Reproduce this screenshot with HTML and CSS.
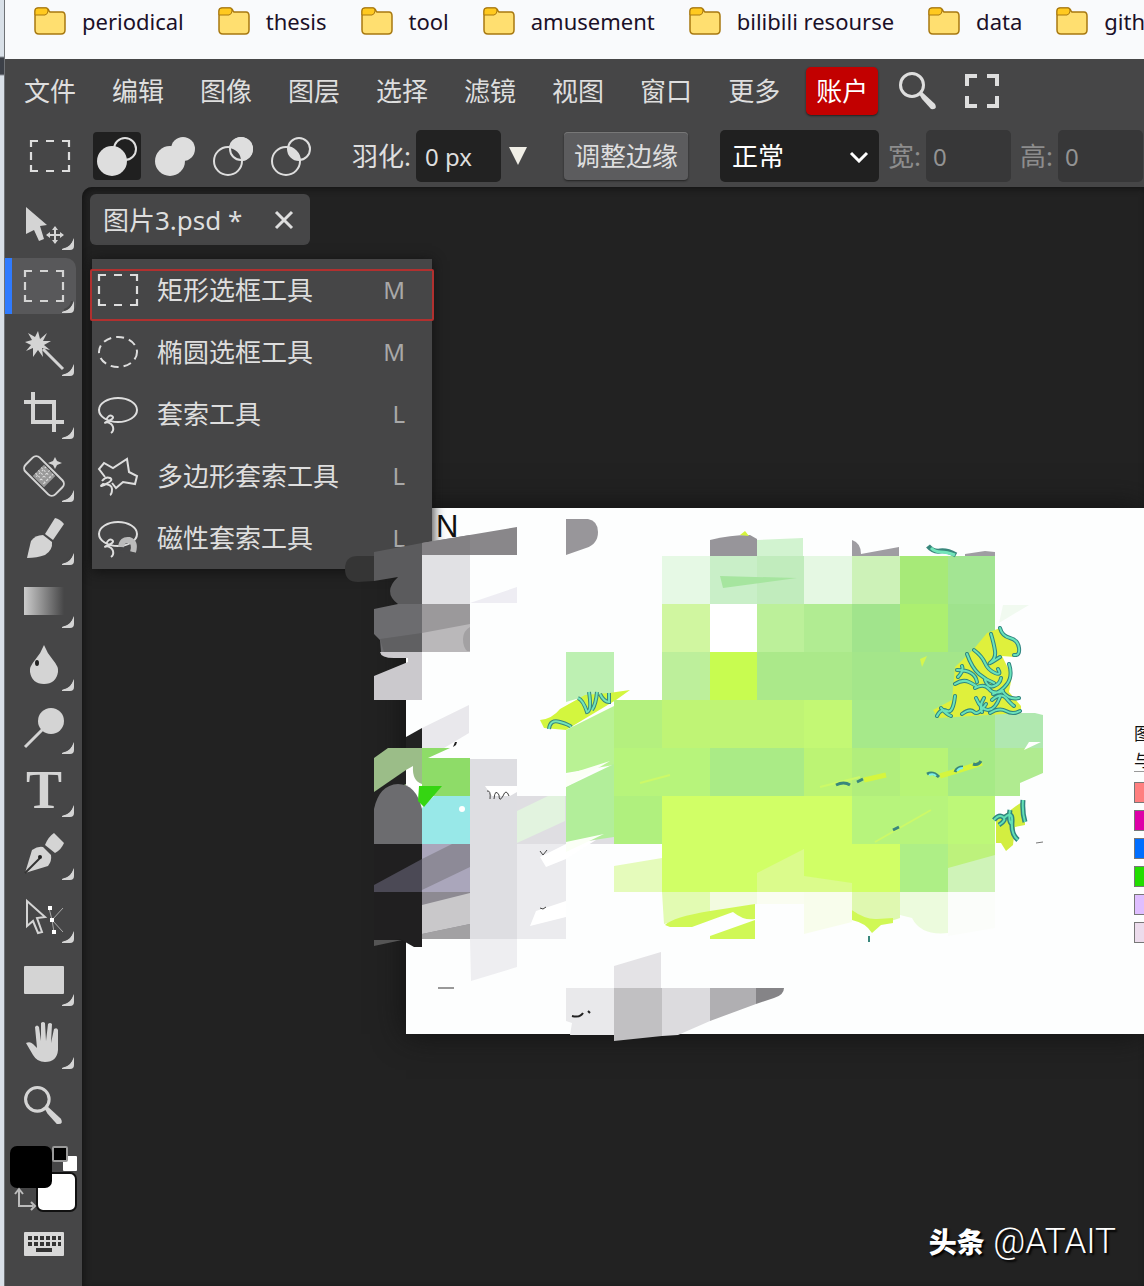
FILE: index.html
```html
<!DOCTYPE html>
<html lang="zh">
<head>
    <meta charset="UTF-8">
    <meta name="viewport" content="width=device-width, initial-scale=1.0">
    <title>图片3.psd</title>
    <link rel="stylesheet" href="styles.css">
</head>
<body>
    <!-- shared symbols -->
    <svg class="defs" width="0" height="0">
        <symbol id="folder" viewBox="0 0 32 28">
            <path d="M1 4q0-3 3-3h8q2 0 3 3l1 1h12q3 0 3 4v14q0 4-4 4H5q-4 0-4-4z" fill="#ffdf70" stroke="#a8780f" stroke-width="1.5"/>
            <path d="M1 4q0-3 3-3h8q2 0 2 3t-3 4H1z" fill="#ffc91f" stroke="#a8780f"/>
        </symbol>
        <symbol id="marquee" viewBox="0 0 42 34">
            <path d="M2 8V2h7M17 2h8M33 2h7v6M40 13v8M40 26v6h-7M25 32h-8M9 32H2v-6M2 21v-8" fill="none" stroke="currentColor" stroke-width="2.2"/>
        </symbol>
        <symbol id="search" viewBox="0 0 40 40">
            <circle cx="14" cy="14" r="11.500" fill="none" stroke="currentColor" stroke-width="3"/>
            <path d="M21 23l3-2 13 12q3 6-4 5L24 28z" fill="currentColor"/>
        </symbol>
        <symbol id="corner" viewBox="0 0 12 12">
            <path d="M0 11q9-3 12-11v8q0 4-4 4H0z" fill="currentColor"/>
            <path d="M2 9q7-2 8-9" fill="none" stroke="#464647" stroke-width="2"/>
        </symbol>
        <symbol id="lasso" viewBox="0 0 42 40">
            <ellipse cx="21" cy="16" rx="19" ry="12" fill="none" stroke="currentColor" stroke-width="2"/>
            <path d="M9 26q3-6 6-4t-3 5-3 1q6 1 7 5t-2 6" fill="none" stroke="currentColor" stroke-width="2"/>
        </symbol>
        <clipPath id="lens"><circle cx="16" cy="27" r="14"/></clipPath>
    </svg>

    <div class="desktop-edge"></div>

    <div class="window">
        <nav class="bookmarks">
            <a href="#"><svg><use href="#folder"/></svg>periodical</a>
            <a href="#"><svg><use href="#folder"/></svg>thesis</a>
            <a href="#"><svg><use href="#folder"/></svg>tool</a>
            <a href="#"><svg><use href="#folder"/></svg>amusement</a>
            <a href="#"><svg><use href="#folder"/></svg>bilibili resourse</a>
            <a href="#"><svg><use href="#folder"/></svg>data</a>
            <a href="#"><svg><use href="#folder"/></svg>github</a>
        </nav>

        <div class="menubar">
            <button>文件</button>
            <button>编辑</button>
            <button>图像</button>
            <button>图层</button>
            <button>选择</button>
            <button>滤镜</button>
            <button>视图</button>
            <button>窗口</button>
            <button>更多</button>
            <button class="account">账户</button>
            <button class="icon-btn" aria-label="搜索"><svg width="40" height="40"><use href="#search"/></svg></button>
            <button class="icon-btn" aria-label="全屏">
                <svg width="34" height="34" viewBox="0 0 34 34"><path d="M2 12V2h10M22 2h10v10M32 22v10H22M12 32H2V22" fill="none" stroke="currentColor" stroke-width="4"/></svg>
            </button>
        </div>

        <div class="options">
            <svg class="current-tool" width="42" height="34"><use href="#marquee"/></svg>
            <div class="modes">
                <button class="active" aria-label="新选区">
                    <svg viewBox="0 0 42 44"><circle cx="29" cy="15" r="11" fill="none" stroke="currentColor" stroke-width="2"/><circle cx="16" cy="27" r="15" fill="currentColor"/></svg>
                </button>
                <button aria-label="添加">
                    <svg viewBox="0 0 42 44"><circle cx="29" cy="15" r="12" fill="currentColor"/><circle cx="16" cy="27" r="15" fill="currentColor"/></svg>
                </button>
                <button aria-label="减去">
                    <svg viewBox="0 0 42 44"><circle cx="29" cy="15" r="12" fill="currentColor"/><circle cx="16" cy="27" r="14" fill="#464647"/><circle cx="29" cy="15" r="11" fill="none" stroke="currentColor" stroke-width="2"/><circle cx="16" cy="27" r="14" fill="none" stroke="currentColor" stroke-width="2"/></svg>
                </button>
                <button aria-label="交叉">
                    <svg viewBox="0 0 42 44"><circle cx="29" cy="15" r="11" fill="none" stroke="currentColor" stroke-width="2"/><circle cx="16" cy="27" r="14" fill="none" stroke="currentColor" stroke-width="2"/><circle cx="29" cy="15" r="11" fill="currentColor" clip-path="url(#lens)"/></svg>
                </button>
            </div>
            <label for="feather">羽化:</label>
            <input id="feather" type="text" value="0 px">
            <button class="drop" aria-label="羽化值"><svg width="18" height="18" viewBox="0 0 18 18"><path d="M0 0h18L9 18z" fill="currentColor"/></svg></button>
            <button class="refine">调整边缘</button>
            <div class="select">
                <select aria-label="样式"><option>正常</option></select>
                <svg width="20" height="12" viewBox="0 0 20 12"><path d="M2 2l8 8 8-8" fill="none" stroke="#fff" stroke-width="3"/></svg>
            </div>
            <label class="off" for="w">宽:</label>
            <input id="w" type="text" value="0" disabled>
            <label class="off" for="h">高:</label>
            <input id="h" type="text" value="0" disabled>
        </div>

        <div class="main">
            <div class="tools">
                <button class="tool" aria-label="移动"><svg viewBox="0 0 71 56">
                    <path d="M21 12l21 18-7 1 4 13-5 2-5-11-8 4z" fill="currentColor"/>
                    <path d="M50 32v16M42 40h16" stroke="currentColor" stroke-width="2"/>
                    <path d="M50 31l3 4h-6zM50 49l3-4h-6zM41 40l4-3v6zM59 40l-4-3v6z" fill="currentColor"/>
                    <use href="#corner" x="57" y="43" width="12" height="12"/></svg></button>
                <button class="tool active" aria-label="矩形选框"><svg viewBox="0 0 71 56">
                    <use href="#marquee" x="18" y="11" width="42" height="34"/>
                    <use href="#corner" x="57" y="43" width="12" height="12"/></svg></button>
                <button class="tool" aria-label="魔棒"><svg viewBox="0 0 71 56">
                    <path d="M33 10l2 8 7-6-4 8 8 0-7 4 6 5-8-2 1 9-5-7-5 7 0-9-7 3 5-6-6-3 7-2-4-7 7 4z" fill="currentColor"/>
                    <path d="M38 28l20 20" stroke="currentColor" stroke-width="3"/>
                    <use href="#corner" x="57" y="43" width="12" height="12"/></svg></button>
                <button class="tool" aria-label="裁剪"><svg viewBox="0 0 71 56">
                    <path d="M19 18h30v30M28 8v30h31" fill="none" stroke="currentColor" stroke-width="4"/>
                    <use href="#corner" x="57" y="43" width="12" height="12"/></svg></button>
                <button class="tool" aria-label="修复画笔"><svg viewBox="0 0 71 56">
                    <g transform="rotate(45 39 29)"><rect x="18" y="19" width="42" height="20" rx="5" fill="none" stroke="currentColor" stroke-width="2"/><rect x="31" y="21" width="16" height="16" fill="#999"/><path d="M34 21v16M39 21v16M44 21v16M31 25h16M31 29h16M31 33h16" stroke="#ddd" stroke-dasharray="2 2"/></g>
                    <path d="M50 10l2 4 5 2-5 2-2 4-2-4-5-2 5-2z" fill="currentColor"/>
                    <use href="#corner" x="57" y="43" width="12" height="12"/></svg></button>
                <button class="tool" aria-label="画笔"><svg viewBox="0 0 71 56">
                    <path d="M50 8q5 1 9 6L48 30l-8-6z" fill="currentColor"/>
                    <path d="M22 48q2-9 4-17 4-6 12-6l9 7q1 8-7 13-8 3-18 3z" fill="currentColor"/>
                    <use href="#corner" x="57" y="43" width="12" height="12"/></svg></button>
                <button class="tool" aria-label="渐变"><svg viewBox="0 0 71 56">
                    <linearGradient id="fade"><stop offset="0" stop-color="#ccc"/><stop offset="1" stop-color="#464647"/></linearGradient>
                    <rect x="19" y="14" width="40" height="28" fill="url(#fade)"/>
                    <use href="#corner" x="57" y="43" width="12" height="12"/></svg></button>
                <button class="tool" aria-label="模糊"><svg viewBox="0 0 71 56">
                    <path d="M39 9q3 8 9 15t5 12q-2 12-14 12T25 36q-1-5 5-12t9-15z" fill="currentColor"/>
                    <ellipse cx="32" cy="27" rx="2" ry="3" fill="#222"/>
                    <use href="#corner" x="57" y="43" width="12" height="12"/></svg></button>
                <button class="tool" aria-label="减淡"><svg viewBox="0 0 71 56">
                    <circle cx="46" cy="22" r="13" fill="currentColor"/>
                    <path d="M20 48l18-18" stroke="currentColor" stroke-width="3"/>
                    <use href="#corner" x="57" y="43" width="12" height="12"/></svg></button>
                <button class="tool" aria-label="文字"><svg viewBox="0 0 71 56">
                    <text class="type" x="39" y="46">T</text>
                    <use href="#corner" x="57" y="43" width="12" height="12"/></svg></button>
                <button class="tool" aria-label="钢笔"><svg viewBox="0 0 71 56">
                    <path d="M49 8l10 10q-3 7-9 10l-10-8q3-8 9-12z" fill="currentColor"/>
                    <path d="M20 48l7-23q6-4 11-3l8 8q1 6-3 11z" fill="currentColor"/>
                    <path d="M20 48l15-15" stroke="#333" stroke-width="2"/><circle cx="35" cy="32" r="2" fill="#222"/>
                    <use href="#corner" x="57" y="43" width="12" height="12"/></svg></button>
                <button class="tool" aria-label="路径选择"><svg viewBox="0 0 71 56">
                    <path d="M22 13l18 16-8 1 5 14-4 1-5-12-6 5z" fill="none" stroke="currentColor" stroke-width="2"/>
                    <path d="M44 20l3 12 2 12M47 32l11-12M47 32l11 12" fill="none" stroke="#aaa"/>
                    <path d="M43 18h4v4h-4zM45 30h4v4h-4zM47 42h4v4h-4z" fill="#fff"/>
                    <use href="#corner" x="57" y="43" width="12" height="12"/></svg></button>
                <button class="tool" aria-label="矩形"><svg viewBox="0 0 71 56">
                    <rect x="19" y="15" width="40" height="28" rx="1" fill="currentColor"/>
                    <use href="#corner" x="57" y="43" width="12" height="12"/></svg></button>
                <button class="tool" aria-label="抓手"><svg viewBox="0 0 71 56">
                    <path d="M21 29q4-2 7 1l4 4-2-21q2-3 4 0l2 14V9q2-2 4 0l1 18 2-17q2-2 4 0l-1 19 3-14q3-2 4 1v20q-1 12-13 12-8 0-12-7z" fill="currentColor"/>
                    <use href="#corner" x="57" y="43" width="12" height="12"/></svg></button>
                <button class="tool" aria-label="缩放"><svg viewBox="0 0 71 56">
                    <use href="#search" x="18" y="8" width="41" height="41"/></svg></button>
                <button class="swatches" aria-label="前景色和背景色"><svg width="77" height="80" viewBox="0 0 77 80">
                    <rect x="32" y="33" width="39" height="38" rx="6" fill="#fff" stroke="#111" stroke-width="2"/>
                    <rect x="5" y="6" width="42" height="42" rx="7" fill="#000"/>
                    <rect x="58" y="16" width="14" height="15" rx="1" fill="#fff"/>
                    <rect x="48" y="7" width="14" height="14" rx="1" fill="#000" stroke="#999" stroke-width="2"/>
                    <path d="M14 50v16h14M10 54l4-5 4 5M26 62l4 4-4 4" fill="none" stroke="#bbb" stroke-width="2"/></svg></button>
                <button class="keyboard" aria-label="键盘"><svg width="40" height="24" viewBox="0 0 40 24">
                    <rect width="40" height="24" rx="1" fill="#d8d8d8"/>
                    <path d="M4 6h33M4 12h33" stroke="#333" stroke-width="4" stroke-dasharray="4 2"/>
                    <path d="M12 18h16" stroke="#333" stroke-width="4"/></svg></button>
            </div>

            <div class="workspace">
                <div class="tab">
                    <span>图片3.psd *</span>
                    <button aria-label="关闭"><svg width="20" height="20" viewBox="0 0 20 20"><path d="M2 2l16 16M18 2L2 18" stroke="currentColor" stroke-width="3"/></svg></button>
                </div>

                <div class="sheet">
                    <span class="sheet-title">N</span>
                    <div class="legend">
                        <span>图例</span>
                        <span class="rule">与界</span>
                        <i class="red"></i>
                        <i class="magenta"></i>
                        <i class="blue"></i>
                        <i class="green"></i>
                        <i class="lilac"></i>
                        <i class="pale"></i>
                    </div>
                </div>

                <div class="flyout">
                    <button><svg viewBox="0 0 42 40"><use href="#marquee" y="3" width="42" height="34"/></svg><span>矩形选框工具</span><kbd>M</kbd></button>
                    <button><svg viewBox="0 0 42 40"><ellipse cx="21" cy="20" rx="19" ry="15" fill="none" stroke="currentColor" stroke-width="2" stroke-dasharray="8 5"/></svg><span>椭圆选框工具</span><kbd>M</kbd></button>
                    <button><svg viewBox="0 0 42 40"><use href="#lasso" width="42" height="40"/></svg><span>套索工具</span><kbd>L</kbd></button>
                    <button><svg viewBox="0 0 42 40"><path d="M8 21L2 13l5-6 9 5L30 3l2 13 8 4-2 8-12-2-7 6-4-5" fill="none" stroke="currentColor" stroke-width="2"/><path d="M5 25q4-5 8-3t-4 6-3 0q9 0 9 5t-2 6" fill="none" stroke="currentColor" stroke-width="2"/></svg><span>多边形套索工具</span><kbd>L</kbd></button>
                    <button><svg viewBox="0 0 42 40"><use href="#lasso" width="42" height="40"/><path d="M24 29q1-8 8-7 7 2 4 12" fill="none" stroke="#bbb" stroke-width="6"/><path d="M22 33l6 1M33 35l6 1" stroke="#464647" stroke-width="2"/></svg><span>磁性套索工具</span><kbd>L</kbd></button>
                    <div class="highlight"></div>
                </div>

                <!-- mosaic painted over the map -->
                <svg class="mosaic" viewBox="344 508 800 536">
                    <path d="M374 556h-16q-13 0-13 13t13 13l16-1z" fill="#353535"/>
                    <path d="M374 552l48-9v61h-24q-16-12 0-27l-24 4z" fill="#5b5b5d"/>
                    <path d="M422 543l95-16v28h-95z" fill="#89878a"/>
                    <path d="M422 543l48-8v20h-48z" fill="#838184"/>
                    <path d="M566 519h22q10 2 10 13 0 12-12 16l-20 7z" fill="#98969a"/>
                    <path d="M422 555h48v49h-48z" fill="#e1e1e4"/>
                    <path d="M470 603l47-16v16z" fill="#eeedf3"/>
                    <path d="M374 609l24-5h24v48h-41l-1-12-6-6z" fill="#6c6c6f"/>
                    <path d="M380 639l42-6v19h-38z" fill="#606062"/>
                    <path d="M422 604h48v48h-48z" fill="#9b999b"/>
                    <path d="M422 633l48-9v28h-48z" fill="#bab8ba"/>
                    <path d="M470 627q-7 4-7 12t4 12h3z" fill="#a3a1a3"/>
                    <path d="M380 652h42v48h-48v-24l34-14v-4h-14q-13 0-14-6z" fill="#cbc9cd"/>
                    <path d="M406 737l16-9v20h-16z" fill="#222"/>
                    <path d="M422 728l47-23v28l-25 15h-22z" fill="#e9e8ec"/>
                    <path d="M453 747l2-5h2l-1 3z" fill="#222"/>
                    <path d="M374 758l14-10h34v48h-48z" fill="#9bbd88"/>
                    <path d="M374 792l32-22v14l-26 12-6 2z" fill="#222"/>
                    <path d="M406 770l7-4q-1 15 9 18v24h-16z" fill="#fff"/>
                    <path d="M422 748h28l-22 10h42v38h-48z" fill="#8edc68"/>
                    <path d="M374 844v-35q5-24 24-25 18 0 24 25v35z" fill="#6c6c6f"/>
                    <path d="M422 808l12-12h36v48h-48z" fill="#98e8e8"/>
                    <path d="M419 786h23l-18 21-6-6z" fill="#35d512"/>
                    <circle cx="462" cy="809" r="3" fill="#fff"/>
                    <path d="M374 844h48v103h-8l-14-8-26 6z" fill="#201f20"/>
                    <path d="M374 885l48-26v33h-48z" fill="#4b4955"/>
                    <path d="M422 844h48v48h-48z" fill="#aaa6bb"/>
                    <path d="M422 859l30-15h18v23l-48 23z" fill="#8d8a97"/>
                    <path d="M422 892h48v47h-48z" fill="#8d8a92"/>
                    <path d="M422 905l48-12v31l-48 10z" fill="#c9c8ca"/>
                    <path d="M422 934l48-10v15h-48z" fill="#a2a1a3"/>
                    <path d="M374 940h28l-28 6z" fill="#555"/>
                    <path d="M470 759h47v180h-47z" fill="#dedee2"/>
                    <path d="M485 786h32v6l-7 4h-18z" fill="#fff"/>
                    <path d="M487 791q4-1 3 8M494 799q1-11 5-4 0 8 4 1 3-8 6 0" fill="none" stroke="#444"/>
                    <path d="M517 796h97v48h-97z" fill="#dfdee2"/>
                    <path d="M517 811l31-15h17v25l-48 22z" fill="#e2f3df"/>
                    <path d="M517 844h49v95h-49z" fill="#ebebee"/>
                    <path d="M546 867l-6-10 26-13 30-4-30 19zM530 926l6-15 30-10v16z" fill="#fff"/>
                    <path d="M540 851l3 4 4-5M540 908l3 1 3-2" fill="none" stroke="#444"/>
                    <path d="M470 939h47v28l-46 14z" fill="#eeeef1"/>
                    <path d="M438 988h16" stroke="#999" stroke-width="2"/>

                    <path d="M566 652h48v43h-24l-24 7z" fill="#bdf0b2"/>
                    <path d="M540 720q12-1 20-11l25-14 24-2 21-3-14 10-50 30-22-2z" fill="#d3f63e"/>
                    <path id="creek" d="M549 729q1-10 11-7t11 5M578 698q5 2 9 14 5-1 2-20M597 692q-1 12-5 18M600 694q4 8 9 8v-9" fill="none" stroke="#39877c" stroke-width="4"/>
                    <path d="M549 729q1-10 11-7t11 5M578 698q5 2 9 14 5-1 2-20M597 692q-1 12-5 18M600 694q4 8 9 8v-9" fill="none" stroke="#72e5ba" stroke-width="2"/>
                    <path d="M566 730l48-24v59l-48 8z" fill="#b9f294"/>
                    <path d="M566 787l48-23v73l-48 7z" fill="#b2ee9a"/>

                    <!-- top row -->
                    <path d="M710 540q20-5 40-5l7 4v17h-47z" fill="#97959a"/>
                    <path d="M740 535l5-4 4 5z" fill="#d5f53c"/>
                    <path d="M757 540l46-2v18h-46z" fill="#d2f3d0"/>
                    <path d="M852 540q9 3 9 14l38-7v9h-47zM965 554l20-3 10 1v4h-30z" fill="#9f9da2"/>
                    <path d="M662 556h48v48h-48z" fill="#e6f9e5"/>
                    <path d="M710 556h47v48h-47z" fill="#c9efc8"/>
                    <path d="M757 556h47v48h-47z" fill="#c1ecbd"/>
                    <path d="M804 556h48v48h-48z" fill="#e5f8e3"/>
                    <path d="M852 556h48v48h-48z" fill="#cdf2b8"/>
                    <path d="M900 556h48v48h-48z" fill="#a7ea78"/>
                    <path d="M948 556h47v48h-47z" fill="#a3e593"/>
                    <path d="M720 576l77 2-74 10z" fill="#a6e59f"/>
                    <path d="M928 546q5 6 12 5t16 4" fill="none" stroke="#39877c" stroke-width="5"/>
                    <path d="M931 548q4 4 10 4t14 3" fill="none" stroke="#72e5ba" stroke-width="3"/>
                    <path d="M1003 605h26l-30 18z" fill="#f1faf0"/>

                    <path d="M662 604h48v48h-48z" fill="#d0f6a0"/>
                    <path d="M710 604h47v48h-47z" fill="#fff"/>
                    <path d="M757 604h47v48h-47z" fill="#bcf09a"/>
                    <path d="M804 604h48v48h-48z" fill="#b1ec92"/>
                    <path d="M852 604h48v48h-48z" fill="#a1e48c"/>
                    <path d="M900 604h48v48h-48z" fill="#acef70"/>
                    <path d="M948 604h47v48h-47z" fill="#9fe38d"/>

                    <path d="M662 652h48v48h-48z" fill="#bdef9b"/>
                    <path d="M710 652h47v48h-47z" fill="#c8fc50"/>
                    <path d="M757 652h95v48h-95z" fill="#abe98a"/>
                    <path d="M852 652h143v48H852z" fill="#a4e68a"/>
                    <path d="M920 659l7-3-5 11z" fill="#d5f64e"/>

                    <path d="M614 700h48v48h-48z" fill="#b4f07e"/>
                    <path d="M662 700h142v48H662z" fill="#bff475"/>
                    <path d="M804 700h48v48h-48z" fill="#c3f874"/>
                    <path d="M852 700h143v48H852z" fill="#a6e98a"/>
                    <path d="M995 713h40l8 2v33h-48z" fill="#b0e8b0"/>

                    <path d="M614 748h96v48h-96z" fill="#b7f47b"/>
                    <path d="M710 748h94v48h-94z" fill="#aaeb86"/>
                    <path d="M804 748h48v48h-48z" fill="#bcf474"/>
                    <path d="M852 748h48v48h-48z" fill="#b1ee7c"/>
                    <path d="M900 748h48v48h-48z" fill="#b7f476"/>
                    <path d="M948 748h47v48h-47z" fill="#a6ea86"/>
                    <path d="M995 748h48v25l-23 10v13h-25z" fill="#b0eb90"/>
                    <path d="M1024 750l5-8h12z" fill="#fff"/>

                    <path d="M614 796h48v48h-48z" fill="#b0f07e"/>
                    <path d="M662 796h190v48H662z" fill="#d1ff66"/>
                    <path d="M852 796h96v48h-96z" fill="#b7f47c"/>
                    <path d="M948 796h47v48h-47z" fill="#bdf878"/>

                    <path d="M614 866l48-8v34h-48z" fill="#e5fbbb"/>
                    <path d="M662 844h238v48H662z" fill="#d1ff66"/>
                    <path d="M757 873l47-24v27l48 7v9h-95z" fill="#dbfb8c"/>
                    <path d="M900 844h48v48h-48z" fill="#aeef86"/>
                    <path d="M948 844h47v48h-47z" fill="#bdf27c"/>
                    <path d="M948 868l47-13v37h-47z" fill="#cff3b8"/>

                    <path d="M662 892h48v20l-46 12z" fill="#e2fbb2"/>
                    <path d="M710 892h47v12l-47 8z" fill="#f2fbe0"/>
                    <path d="M757 892h47v12h-47z" fill="#fafdf1"/>
                    <path d="M804 892h48v30l-48 12z" fill="#f8fdec"/>
                    <path d="M852 892h48v26l-24 8-24-16z" fill="#dff8b0"/>
                    <path d="M900 892h48v41q-27 3-36-15l-12-3z" fill="#ecfbdd"/>
                    <path d="M948 892h47v36l-47 8z" fill="#fbfdfa"/>
                    <path d="M665 925q8-8 45-14l45-7v15q-11 2-22-7l-41 15h-22zM710 936l45-16v19h-45z" fill="#d0f855"/>
                    <path d="M852 910q14 10 25 9l16-1v5l-12 2-9 8q-6-10-20-13z" fill="#d0f855"/>
                    <path d="M869 936v6" stroke="#39877c" stroke-width="2"/>

                    <!-- thin streaks left between the strokes -->
                    <path d="M820 787l40-10M875 842l56-32M640 783l30-8" fill="none" stroke="#ccf968" stroke-width="2"/>
                    <path d="M864 780l22-5M940 776l20-6 22-7" fill="none" stroke="#d5f63e" stroke-width="5"/>
                    <path d="M836 785q8-4 14 0M857 782l6-3M927 774q6-3 12 3M955 772q2-5 8-5M973 764q5 2 8-3M893 830l6-3" fill="none" stroke="#39877c" stroke-width="3"/>
                    <path d="M929 775q4-2 7 1M957 771q2-3 6-3" fill="none" stroke="#7df0ea" stroke-width="2"/>
                    <path d="M566 775l44-14-44 26zM566 842l38-8-38 18z" fill="#fbfff6"/>

                    <!-- uncovered map pieces -->
                    <path d="M1000 628l5 6 15 14-5 9-13-1 10 20-3 16 12 14v7l-83 5-5-8 19-10 3-33 18-17 14-17z" fill="#dff03c"/>
                    <defs>
                        <path id="rivers" d="M991 634q3 10 4 17t-4 11 9-5M1000 628q2 8 10 10t9 10-5 7M974 650q8 6 11 13t10 10 3-4M967 654q5 14 12 20t15 9M957 670q9 0 14 3t6 9M955 684q8-5 14-2t8 5M958 677q6-6 4-11M975 688q9-5 14 1t14 2M985 680q3 8 9 6t7-8M1009 664q4 12-2 20t-14 10M976 698q5 12 12 12t12-13M937 716q4-8 10-5t8-15M941 708q5 6 10 8M962 714q8-6 12-2t12-8M990 713q9-6 16-2t14 0M1003 692q6 8 16 6M984 698q-5 8-2 14M992 700q9-8 14-2t8 8"/>
                        <path id="brook" d="M994 820q5-6 9-3t-4 8M1004 818q9-8 8 4t6 18M1010 810q-2 12 2 14M1023 800q-1 12 2 22"/>
                    </defs>
                    <g fill="none" stroke-linecap="round">
                        <use href="#rivers" stroke="#2f8580" stroke-width="4"/>
                        <use href="#rivers" stroke="#6ae3bb" stroke-width="2"/>
                    </g>
                    <path d="M996 843v-22l20-15 9-6v25l-10 2-2 18-7 6-5-8z" fill="#d3ee40"/>
                    <g fill="none">
                        <use href="#brook" stroke="#2f8580" stroke-width="5"/>
                        <use href="#brook" stroke="#62dfb5" stroke-width="2"/>
                    </g>
                    <path d="M1036 843l7-1" stroke="#777"/>

                    <!-- bottom strip -->
                    <path d="M566 988h48v47h-44l2-12-6-2z" fill="#e9e9eb"/>
                    <path d="M572 1016q8 2 11-3M588 1011l2 2" fill="none" stroke="#222" stroke-width="2"/>
                    <path d="M614 966l47-14v36h-47z" fill="#e4e3e6"/>
                    <path d="M614 988h48v48l-48 5z" fill="#c1c0c2"/>
                    <path d="M662 988h48v33l-32 14-16 1z" fill="#dcdbde"/>
                    <path d="M710 988h46v16l-46 17z" fill="#b0afb2"/>
                    <path d="M756 988h28q0 7-10 10l-18 6z" fill="#858487"/>
                </svg>

                <div class="watermark"><b>头条</b> @ATAIT</div>
            </div>
        </div>
    </div>
</body>
</html>
```
FILE: styles.css
```css
* {
    box-sizing: border-box;
}

body {
    margin: 0;
    min-height: 100vh;
    display: flex;
    overflow: hidden;
    background: #464647;
    color: #dedede;
    font-family: "Noto Sans", "Noto Sans CJK SC", sans-serif;
    font-size: 26px;
    line-height: 36px;
}

button, input, select {
    font: inherit;
    color: inherit;
    background: none;
    border: none;
    padding: 0;
    margin: 0;
}

svg {
    display: block;
    flex: none;
}

.defs {
    position: absolute;
}

.desktop-edge {
    width: 5px;
    flex: none;
    background: linear-gradient(#d9e0e8 56px, #3c4048 58px, #3c4048 74px, #d9e0e8 76px);
    border-right: 1px solid #6f7276;
}

.window {
    flex: 1;
    min-width: 0;
    display: flex;
    flex-direction: column;
}

/* Bookmarks */
.bookmarks {
    display: flex;
    gap: 34px;
    height: 59px;
    padding: 3px 0 0 29px;
    overflow: hidden;
    background: #f9fafc;
}

.bookmarks a {
    display: flex;
    align-items: center;
    gap: 16px;
    height: 36px;
    color: #1b1028;
    font-size: 22px;
    text-decoration: none;
    white-space: nowrap;
}

.bookmarks svg {
    width: 32px;
    height: 28px;
}

/* Menu */
.menubar {
    display: flex;
    align-items: center;
    gap: 36px;
    height: 63px;
    padding-left: 19px;
    white-space: nowrap;
}

.account {
    height: 48px;
    margin-left: -10px;
    padding: 0 10px;
    border-radius: 5px;
    background: #c20000;
    box-shadow: 0 1px 2px #222;
    color: #fff;
}

.icon-btn {
    margin-left: -16px;
}

.icon-btn + .icon-btn {
    margin-left: -9px;
}

/* Tool options */
.options {
    display: flex;
    align-items: center;
    height: 65px;
    padding: 3px 0 0 24px;
    white-space: nowrap;
}

.modes {
    display: flex;
    gap: 10px;
    margin: 0 37px 0 22px;
}

.modes button {
    display: flex;
    justify-content: center;
    align-items: center;
    width: 48px;
    height: 48px;
    border-radius: 4px;
}

.modes svg {
    width: 42px;
    height: 44px;
}

.modes .active {
    background: #202020;
}

.options input {
    width: 85px;
    height: 52px;
    margin-left: 5px;
    padding: 0 9px;
    border-radius: 5px;
    background: #222;
    font-size: 24px;
}

.options input:disabled {
    background: #373738;
    color: #939393;
    padding: 0 7px;
}

.options .off {
    margin-left: 9px;
    color: #8d8d8d;
}

.drop {
    margin: 0 37px 0 8px;
    color: #f0eee6;
}

.refine {
    height: 48px;
    padding: 0 10px;
    border-radius: 4px;
    background: #5c5c5e;
    box-shadow: inset 0 1px #777, 0 1px 2px #222;
}

.select {
    position: relative;
    margin-left: 32px;
}

.select select {
    width: 159px;
    height: 52px;
    padding-left: 12px;
    border-radius: 5px;
    background: #202020;
    color: #fff;
    appearance: none;
}

.select svg {
    position: absolute;
    right: 10px;
    top: 21px;
    pointer-events: none;
}

/* Toolbar */
.main {
    flex: 1;
    display: flex;
}

.tools {
    display: flex;
    flex-direction: column;
    gap: 7px;
    width: 77px;
    flex: none;
    padding-top: 8px;
    color: #d4d4d4;
}

.tool {
    width: 71px;
    height: 56px;
}

.tool svg {
    overflow: visible;
}

.tool.active {
    background: #58585a;
    border-radius: 0 10px 10px 0;
    box-shadow: inset 7px 0 #2f7bff;
}

.type {
    font: bold 54px "Liberation Serif", serif;
    text-anchor: middle;
    fill: currentColor;
}

.swatches {
    height: 80px;
}

.keyboard {
    padding: 5px 19px;
}

/* Workspace */
.workspace {
    position: relative;
    flex: 1;
    min-width: 0;
    padding: 7px 8px;
    overflow: hidden;
    background: #222;
    border-radius: 10px 0 0 0;
    box-shadow: inset 2px 2px 6px #151515;
}

.tab {
    display: flex;
    justify-content: space-between;
    align-items: center;
    width: 220px;
    height: 51px;
    padding: 0 16px 0 13px;
    border-radius: 6px;
    background: #464647;
    white-space: nowrap;
}

.sheet {
    position: absolute;
    left: 324px;
    right: 0;
    top: 321px;
    height: 526px;
    overflow: hidden;
    background: #fdfefe;
    box-shadow: 0 0 30px #111;
    color: #111;
}

.sheet-title {
    display: block;
    padding-left: 30px;
    font-size: 31px;
    line-height: 38px;
    font-family: "Liberation Sans", sans-serif;
}

.legend {
    position: absolute;
    left: 728px;
    top: 216px;
    display: flex;
    flex-direction: column;
    gap: 7px;
    width: 80px;
}

.legend span {
    font-size: 17px;
    line-height: 20px;
}

.legend .rule {
    margin-bottom: 3px;
    border-bottom: 1px solid #999;
}

.legend i {
    width: 40px;
    height: 21px;
    border: 1px solid #777;
}

.legend .red { background: #ff7f7f; }
.legend .magenta { background: #dd00a8; }
.legend .blue { background: #006eff; }
.legend .green { background: #22dd00; }
.legend .lilac { background: #dfbeff; }
.legend .pale { background: #ecdcec; }

/* Tool flyout */
.flyout {
    position: absolute;
    left: 10px;
    top: 72px;
    width: 340px;
    background: #464647;
    box-shadow: 0 2px 12px #111;
}

.flyout button {
    display: flex;
    align-items: center;
    width: 100%;
    height: 62px;
    padding: 0 27px 0 5px;
}

.flyout svg {
    width: 42px;
    height: 40px;
    margin-right: 18px;
}

.flyout kbd {
    margin-left: auto;
    color: #a8a8a8;
    font: inherit;
    font-size: 24px;
}

.highlight {
    position: absolute;
    left: -2px;
    right: -2px;
    top: 10px;
    height: 52px;
    border: 2px solid #b1302f;
    border-radius: 2px;
    pointer-events: none;
}

.mosaic {
    position: absolute;
    left: 262px;
    top: 321px;
    width: 800px;
    height: 536px;
    pointer-events: none;
}

.watermark {
    position: absolute;
    right: 28px;
    bottom: 24px;
    color: #fff;
    font-family: Roboto, "Noto Sans CJK SC", sans-serif;
    font-weight: 300;
    font-size: 35px;
    text-shadow: 2px 2px 2px #000;
}

.watermark b {
    font-size: 28px;
    font-weight: 900;
}
```
